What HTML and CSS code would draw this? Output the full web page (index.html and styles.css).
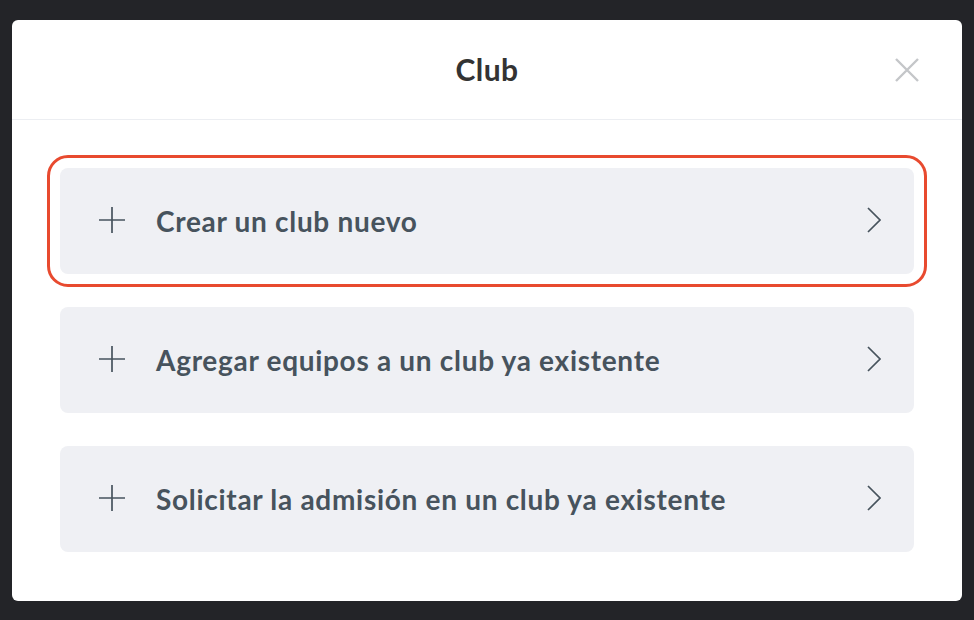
FILE: index.html
```html
<!DOCTYPE html>
<html>
<head>
  <title>Club</title>
  <link rel="stylesheet" href="styles.css">
</head>
<body>
  <div class="modal">
    <div class="modal-header">
      <h1>Club</h1>
      <button class="close" type="button" aria-label="Cerrar">
        <svg width="24" height="24" viewBox="0 0 24 24"><path d="M1 1L23 23M23 1L1 23" stroke="#c4c6c9" stroke-width="2.4" fill="none"/></svg>
      </button>
    </div>
    <div class="modal-body">
      <a class="option selected" href="#">
        <svg class="plus" width="26" height="26" viewBox="0 0 26 26"><path d="M13 0V26M0 13H26" stroke="#47535d" stroke-width="1.7" fill="none"/></svg>
        <span class="label">Crear un club nuevo</span>
        <svg class="chev" width="14" height="26" viewBox="0 0 14 26"><path d="M1 1L13 13L1 25" stroke="#47535d" stroke-width="1.7" fill="none"/></svg>
      </a>
      <a class="option" href="#">
        <svg class="plus" width="26" height="26" viewBox="0 0 26 26"><path d="M13 0V26M0 13H26" stroke="#47535d" stroke-width="1.7" fill="none"/></svg>
        <span class="label">Agregar equipos a un club ya existente</span>
        <svg class="chev" width="14" height="26" viewBox="0 0 14 26"><path d="M1 1L13 13L1 25" stroke="#47535d" stroke-width="1.7" fill="none"/></svg>
      </a>
      <a class="option" href="#">
        <svg class="plus" width="26" height="26" viewBox="0 0 26 26"><path d="M13 0V26M0 13H26" stroke="#47535d" stroke-width="1.7" fill="none"/></svg>
        <span class="label">Solicitar la admisión en un club ya existente</span>
        <svg class="chev" width="14" height="26" viewBox="0 0 14 26"><path d="M1 1L13 13L1 25" stroke="#47535d" stroke-width="1.7" fill="none"/></svg>
      </a>
    </div>
  </div>
</body>
</html>
```

FILE: styles.css
```css
body {
  margin: 0;
  background-color: #232428;
  font-family: Lato, "Open Sans", Arial, sans-serif;
  padding: 20px 12px 19px 12px;
}

.modal {
  background-color: #fff;
  border-radius: 6px;
  height: 581px;
  box-sizing: border-box;
}

.modal-header {
  position: relative;
  height: 99px;
  border-bottom: 1px solid #eceef2;
  display: flex;
  align-items: center;
  justify-content: center;
}

h1 {
  margin: 0;
  font-size: 30px;
  font-weight: 700;
  letter-spacing: 0.4px;
  color: #333;
  padding-bottom: 1px;
}

.close {
  position: absolute;
  right: 43px;
  top: 38px;
  border: none;
  background: none;
  padding: 0;
  width: 24px;
  height: 24px;
}

.close svg {
  display: block;
}

.modal-body {
  padding: 48px;
  display: flex;
  flex-direction: column;
  gap: 33px;
}

.option {
  display: flex;
  align-items: center;
  height: 106px;
  padding: 0 33px 0 39px;
  background-color: #eff0f4;
  border-radius: 8px;
  text-decoration: none;
  color: #47535d;
}

.option.selected {
  outline: 3px solid #e84a2f;
  outline-offset: 10px;
}

.plus {
  flex-shrink: 0;
  margin-top: -3px;
}

.label {
  flex: 1;
  margin-left: 31px;
  font-size: 28px;
  font-weight: 700;
  letter-spacing: 0.7px;
}

.chev {
  flex-shrink: 0;
  margin-top: -2px;
}
```
